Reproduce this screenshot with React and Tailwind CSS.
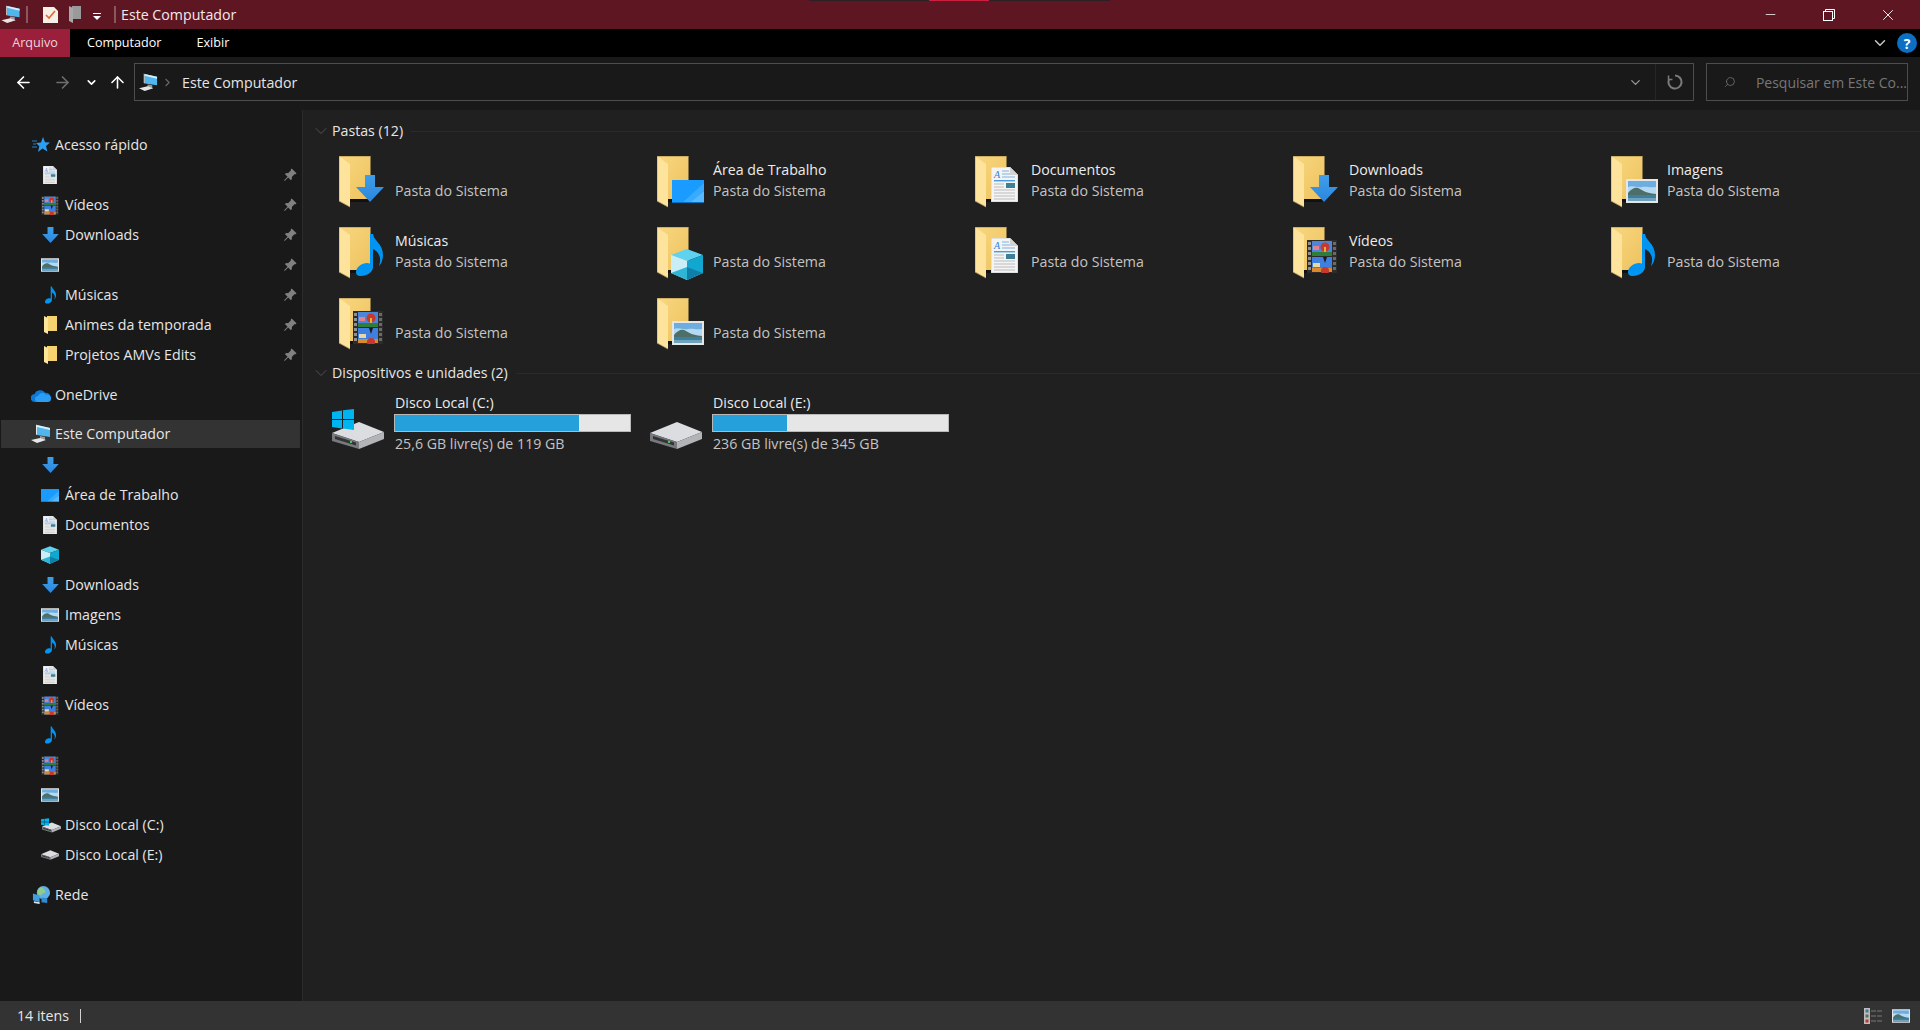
import { BsPinAngleFill } from 'react-icons/bs';
import { ArrowLeft, ArrowRight, ArrowUp, ChevronDown, ChevronRight, Search, Minus, X } from 'lucide-react';

// small drawings, each one on its own viewBox so the same shape works in sidebar and folder
function Arrow() {
  return (
    <svg viewBox="0 0 28 27" className="w-full h-full">
      <defs>
        <linearGradient id="arrowGrad" x1="0" y1="0" x2="0" y2="1">
          <stop offset="0" stopColor="#3f9fe8" />
          <stop offset="1" stopColor="#2b86de" />
        </linearGradient>
      </defs>
      <path d="M9 0h10v12h9L14 27 0 12h9z" fill="url(#arrowGrad)" />
    </svg>
  );
}

function Desktop() {
  return (
    <svg viewBox="0 0 32 23" className="w-full h-full">
      <rect width="32" height="23" fill="#1a9bff" />
      <path d="M10 23 L32 3 V10 L20 23z" fill="#38abff" />
      <path d="M18 23 L32 11 V23z" fill="#58b9ff" />
      <rect y="22" width="32" height="1" fill="#0b6fc0" />
    </svg>
  );
}

function Note() {
  return (
    <svg viewBox="0 0 27 42" className="w-full h-full">
      <path d="M14 0h3c1 7 10 10 10 21 0 5-2 9-4 11 1-4 2-7 0-11-1-3-4-5-6-6v18c0 5-6 9-12 9-4 0-5-2-5-4 0-5 6-9 11-9l3 .5z" fill="#0095f2" />
    </svg>
  );
}

function Cube() {
  return (
    <svg viewBox="0 0 32 31" className="w-full h-full">
      <path d="M16 0 32 6 16 12 0 6z" fill="#5ed2ee" />
      <path d="M0 6 16 12V31L0 24z" fill="#c9eef7" />
      <path d="M32 6 16 12V31L32 24z" fill="#12a7d1" />
      <path d="M0 24 16 18 32 24 16 31z" fill="#2eb5d6" />
      <path d="M16 18 32 24 16 31z" fill="#0f7fa8" />
    </svg>
  );
}

function Doc() {
  return (
    <svg viewBox="0 0 27 35" className="w-full h-full">
      <path d="M0 0h19l8 8v27H0z" fill="#f4f4f4" stroke="#b5b5b5" strokeWidth="0.6" />
      <path d="M19 0v8h8z" fill="#d2d2d2" />
      <text x="3" y="11" fontSize="10" fontStyle="italic" fontFamily="Liberation Serif, serif" fill="#2f86d2">A</text>
      <path d="M11 4h7M11 7h8M11 10h13" stroke="#7db4e4" strokeWidth="1.200" />
      <rect x="3" y="13" width="21" height="1.400" fill="#4a9cde" />
      <rect x="15" y="16" width="9" height="5" fill="#3e7f96" />
      <path d="M3 17h10M3 20h10M3 23h21M3 26h21M3 29h21M3 32h21" stroke="#bcbcbc" strokeWidth="1.200" />
    </svg>
  );
}

function Picture() {
  return (
    <svg viewBox="0 0 32 24" className="w-full h-full">
      <rect width="32" height="24" fill="#e6e6e6" />
      <rect x="2" y="2" width="28" height="20" fill="#b5d9f2" />
      <path d="M2 2h28v6c-6 1-10-1-14 0S6 6 2 8z" fill="#6eaddf" />
      <path d="M2 14c3-4 7-6 10-5s6 5 18 6v3H2z" fill="#4d6f68" />
      <rect x="2" y="16" width="28" height="6" fill="#3d7ea3" />
      <rect x="2" y="19" width="28" height="3" fill="#6ea2bd" />
    </svg>
  );
}

function Film() {
  const holes = [2, 7, 12, 17, 22, 27];
  return (
    <svg viewBox="0 0 30 33" className="w-full h-full">
      <rect width="30" height="33" fill="#2c2c2c" />
      {holes.map(y => (
        <g key={y}>
          <rect x="1" y={y} width="3" height="3" fill="#8f8f8f" />
          <rect x="26" y={y} width="3" height="3" fill="#6a6a6a" />
        </g>
      ))}
      <rect x="5" y="1" width="20" height="15" fill="#4c86d8" />
      <rect x="5" y="17" width="20" height="15" fill="#3f7fe0" />
      <rect x="5" y="12" width="20" height="4" fill="#2f7d3a" />
      <rect x="5" y="28" width="20" height="4" fill="#d98a2e" />
      <circle cx="18" cy="7" r="4.500" fill="#c9382c" />
      <rect x="17" y="7" width="2" height="5" fill="#e3b23a" />
      <circle cx="18" cy="31" r="4" fill="#c9382c" />
      <rect x="6" y="6" width="6" height="4" fill="#e77f8c" />
      <rect x="6" y="23" width="7" height="4" fill="#e7d7a0" />
      <path d="M16 17h4l-2 6z" fill="#1a1a1a" />
    </svg>
  );
}

function Drive() {
  return (
    <svg viewBox="0 0 52 27" className="w-full h-full">
      <path d="M0 11 27 0l25 10-25 10z" fill="#dcdde1" />
      <path d="M0 11 27 20v7L0 19z" fill="#77797d" />
      <path d="M27 20 52 10v7L27 27z" fill="#b2b4b8" />
      <path d="M3 14 24 20.500v3L3 17z" fill="#333436" />
      <rect x="18" y="19" width="2" height="2" fill="#39d353" />
    </svg>
  );
}

function WinLogo() {
  return (
    <svg viewBox="0 0 22 21" className="w-full h-full">
      <path d="M0 3l10-1.500v8.500H0zM11 1.300 22 0v10H11zM0 11h10v8.500L0 18zM11 11h11v10l-11-1.400z" fill="#00b4f0" />
    </svg>
  );
}

function Computer() {
  return (
    <svg viewBox="0 0 20 20" className="w-full h-full">
      <path d="M6 1 19 4v9L6 11z" fill="#4fb7ee" />
      <path d="M6 1 19 4v2L6 3z" fill="#d7eefb" />
      <path d="M5 0.500 6 1v10l-1-.5z" fill="#e8e8e8" />
      <path d="M9 12l5 1v3l-5-1z" fill="#9a9a9a" />
      <path d="M0 16l9-2 6 2-9 3z" fill="#e6e6e6" />
    </svg>
  );
}

function Star() {
  return (
    <svg viewBox="0 0 18 16" className="w-full h-full">
      <path d="M11 0l2 5.300 5 .3-4 3.400 1.400 5.500L10.500 11.500 6 15l1.300-5.700L4 6l5-.5z" fill="#2a9df4" />
      <path d="M0 4h5M1 7h3M0 10h5" stroke="#2a9df4" strokeWidth="0.800" />
    </svg>
  );
}

function Cloud() {
  return (
    <svg viewBox="0 0 20 13" className="w-full h-full">
      <path d="M4 13a4 4 0 0 1-.4-8A6 6 0 0 1 14 3.800 4.600 4.600 0 0 1 16 13z" fill="#0f78d4" />
      <path d="M7 13a3 3 0 0 1 0-6 4.500 4.500 0 0 1 8-1.200A3.700 3.700 0 0 1 20 9.500 3.500 3.500 0 0 1 16.500 13z" fill="#2a9df4" />
    </svg>
  );
}

function Globe() {
  return (
    <svg viewBox="0 0 20 20" className="w-full h-full">
      <circle cx="12" cy="7" r="7" fill="#5fb0e8" />
      <path d="M9 1c3 1 5 3 5 5s-3 1-4 3-3 1-4-1 0-5 3-7z" fill="#8ecb8c" />
      <path d="M1 8l7 2v7l-7-2z" fill="#3f9de0" />
      <path d="M2 16l6 1v2l-6-1z" fill="#e3e3e3" />
      <path d="M10 12l6 1v5l-6-1z" fill="#2f8bd2" />
    </svg>
  );
}

function FolderSmall() {
  return (
    <svg viewBox="0 0 13 18" className="w-full h-full">
      <rect x="3" width="10" height="15" fill="#f6d271" />
      <path d="M0 0l4 2v16l-4-2z" fill="#ffe59a" />
    </svg>
  );
}

// big folder with an overlay drawing lying on its lower right corner
function Folder({ overlay }) {
  return (
    <div className="relative w-[49px] h-[53px] shrink-0 mt-[2px]">
      <svg viewBox="0 0 32 52" className="absolute left-0 top-0 w-[32px] h-[52px]">
        <defs>
          <linearGradient id="folderBack" x1="0" y1="0" x2="1" y2="1">
            <stop offset="0" stopColor="#f8d77f" />
            <stop offset="1" stopColor="#eec25f" />
          </linearGradient>
        </defs>
        <path d="M0 0h31.500v43H11z" fill="url(#folderBack)" />
        <rect x="11" y="43" width="20" height="3" fill="#111" />
        <path d="M0 0 11 8v43L0 45z" fill="#fde39b" />
        <path d="M0 0h31.500" stroke="#a88a52" strokeWidth="1" />
        <path d="M0 0v45l11 6" stroke="#b89a60" strokeWidth="0.800" fill="none" />
      </svg>
      {overlay === 'arrow' && <div className="absolute left-[17px] top-[19px] w-[28px] h-[27px]"><Arrow /></div>}
      {overlay === 'desktop' && <div className="absolute left-[15px] top-[24px] w-[32px] h-[23px]"><Desktop /></div>}
      {overlay === 'note' && <div className="absolute left-[17px] top-[7px] w-[27px] h-[42px]"><Note /></div>}
      {overlay === 'cube' && <div className="absolute left-[14px] top-[22px] w-[32px] h-[31px]"><Cube /></div>}
      {overlay === 'doc' && <div className="absolute left-[16px] top-[11px] w-[27px] h-[35px]"><Doc /></div>}
      {overlay === 'picture' && <div className="absolute left-[15px] top-[23px] w-[32px] h-[24px]"><Picture /></div>}
      {overlay === 'film' && <div className="absolute left-[14px] top-[13px] w-[30px] h-[33px]"><Film /></div>}
    </div>
  );
}

const folders = [
  { name: '', overlay: 'arrow' },
  { name: 'Área de Trabalho', overlay: 'desktop' },
  { name: 'Documentos', overlay: 'doc' },
  { name: 'Downloads', overlay: 'arrow' },
  { name: 'Imagens', overlay: 'picture' },
  { name: 'Músicas', overlay: 'note' },
  { name: '', overlay: 'cube' },
  { name: '', overlay: 'doc' },
  { name: 'Vídeos', overlay: 'film' },
  { name: '', overlay: 'note' },
  { name: '', overlay: 'film' },
  { name: '', overlay: 'picture' },
];

const drives = [
  { name: 'Disco Local (C:)', info: '25,6 GB livre(s) de 119 GB', used: 'w-[184px]', windows: true },
  { name: 'Disco Local (E:)', info: '236 GB livre(s) de 345 GB', used: 'w-[74px]', windows: false },
];

function SideIcon({ kind }) {
  if (kind === 'doc') return <div className="w-[14px] h-[18px]"><Doc /></div>;
  if (kind === 'film') return <div className="w-[18px] h-[19px]"><Film /></div>;
  if (kind === 'arrow') return <div className="w-[17px] h-[16px]"><Arrow /></div>;
  if (kind === 'picture') return <div className="w-[18px] h-[14px]"><Picture /></div>;
  if (kind === 'note') return <div className="w-[11px] h-[18px]"><Note /></div>;
  if (kind === 'folder') return <div className="w-[13px] h-[18px]"><FolderSmall /></div>;
  if (kind === 'desktop') return <div className="w-[18px] h-[13px]"><Desktop /></div>;
  if (kind === 'cube') return <div className="w-[18px] h-[18px]"><Cube /></div>;
  if (kind === 'driveC') {
    return (
      <div className="relative w-[20px] h-[15px]">
        <div className="absolute left-[1px] bottom-0 w-[19px] h-[11px]"><Drive /></div>
        <div className="absolute left-0 top-0 w-[8px] h-[8px]"><WinLogo /></div>
      </div>
    );
  }
  return <div className="w-[18px] h-[10px]"><Drive /></div>;
}

function SideItem({ kind, label, pinned }) {
  return (
    <div className="h-[30px] flex items-center pl-[41px] pr-[5px]">
      <div className="w-[18px] flex justify-center shrink-0"><SideIcon kind={kind} /></div>
      <span className="ml-[6px] flex-1 text-[#e6e6e6]">{label}</span>
      {pinned && <BsPinAngleFill className="w-[14px] h-[14px] text-[#808080]" />}
    </div>
  );
}

function SideHead({ icon, label }) {
  return (
    <div className="h-[30px] flex items-center pl-[31px]">
      <div className="w-[20px] flex justify-center shrink-0">{icon}</div>
      <span className="ml-[4px] text-[#e6e6e6]">{label}</span>
    </div>
  );
}

function SectionHead({ label }) {
  return (
    <div className="h-[28px] flex items-center pl-[8px]">
      <ChevronDown className="w-[20px] h-[20px] text-[#5c5c5c]" strokeWidth={1} />
      <span className="ml-px text-[#e6e6e6]">{label}</span>
      <div className="flex-1 h-px bg-[#2a2a2a] ml-[8px]" />
    </div>
  );
}

export default function App() {
  return (
    <div className="relative w-[1920px] h-[1030px] flex flex-col overflow-hidden bg-[#202020] text-[14.2px] text-white font-['Open_Sans','Noto_Sans',sans-serif]">
      {/* title bar */}
      <div className="relative h-[29px] shrink-0 bg-[#5f1623] flex items-center">
        <div className="absolute left-[809px] top-0 w-[301px] h-px bg-[#2b2024]" />
        <div className="absolute left-[929px] top-0 w-[60px] h-px bg-[#c8203f]" />
        <div className="ml-[1px] w-[20px] h-[19px]"><Computer /></div>
        <div className="ml-[5px] w-[2px] h-[17px] bg-[#8a5660]" />
        <svg viewBox="0 0 15 16" className="ml-[15px] w-[15px] h-[16px]">
          <path d="M0 0h11l4 4v12H0z" fill="#f5f0e6" />
          <path d="M3 8l3 3 6-7" stroke="#e8642c" strokeWidth="1.600" fill="none" />
        </svg>
        <svg viewBox="0 0 12 17" className="ml-[11px] w-[12px] h-[17px]">
          <path d="M3 0h9v13H3z" fill="#9a9a9a" />
          <path d="M0 0l4 2v15l-4-2z" fill="#a8a8a8" />
        </svg>
        <svg viewBox="0 0 8 7" className="ml-[12px] mt-[3px] w-[8px] h-[7px]">
          <rect width="8" height="1" fill="#fff" />
          <path d="M0 3h8L4 7z" fill="#fff" />
        </svg>
        <div className="ml-[13px] w-[2px] h-[17px] bg-[#8a5660]" />
        <span className="ml-[5px] text-[#f4e9eb]">Este Computador</span>
        <div className="flex-1" />
        <Minus className="w-[15px] h-[15px]" strokeWidth={1.200} />
        <svg viewBox="0 0 12 12" className="ml-[45px] w-[12px] h-[12px]" fill="none" stroke="#fff">
          <rect x="0.500" y="2.500" width="9" height="9" />
          <path d="M2.500 2.500v-2h9v9h-2" />
        </svg>
        <X className="ml-[44px] mr-[23px] w-[18px] h-[18px]" strokeWidth={1.200} />
      </div>

      {/* ribbon tabs */}
      <div className="h-[28px] shrink-0 bg-black flex items-center text-[12.6px]">
        <div className="w-[70px] h-full bg-[#9b1e3b] flex items-center justify-center text-[#ecd5da]">Arquivo</div>
        <span className="ml-[17px]">Computador</span>
        <span className="ml-[35px]">Exibir</span>
        <div className="flex-1" />
        <ChevronDown className="w-[18px] h-[18px] text-[#c8c8c8]" strokeWidth={2} />
        <div className="ml-[8px] mr-[3px] w-[20px] h-[20px] rounded-full bg-[#0b6fc4] flex items-center justify-center text-[14px] font-bold">?</div>
      </div>

      {/* address row */}
      <div className="h-[53px] shrink-0 bg-[#191919] flex items-start pt-[6px]">
        <div className="w-[134px] h-[38px] flex items-center shrink-0">
          <ArrowLeft className="ml-[14px] w-[19px] h-[19px]" strokeWidth={2} />
          <ArrowRight className="ml-[20px] w-[19px] h-[19px] text-[#6e6e6e]" strokeWidth={2} />
          <ChevronDown className="ml-[13px] w-[13px] h-[13px]" strokeWidth={3} />
          <ArrowUp className="ml-[10px] w-[19px] h-[19px]" strokeWidth={2} />
        </div>
        <div className="w-[1560px] h-[38px] border border-[#4d4d4d] flex items-center">
          <div className="ml-[4px] w-[19px] h-[19px]"><Computer /></div>
          <ChevronRight className="ml-[3px] w-[13px] h-[13px] text-[#6a6a6a]" strokeWidth={2} />
          <span className="ml-[8px] mt-[2px] text-[#e6e6e6]">Este Computador</span>
          <div className="flex-1" />
          <ChevronDown className="w-[15px] h-[15px] text-[#9a9a9a]" strokeWidth={2} />
          <div className="ml-[12px] w-px h-full bg-[#262626]" />
          <svg viewBox="0 0 16 16" className="ml-[11px] mr-[10px] w-[16px] h-[16px]" fill="none" stroke="#7a7a7a" strokeWidth="2">
            <path d="M8 1.500a6.500 6.500 0 1 1-5.800 3.600" />
            <path d="M1.500 1.500v4h4" strokeWidth="1.500" />
          </svg>
        </div>
        <div className="ml-[12px] w-[202px] h-[38px] border border-[#4d4d4d] flex items-center">
          <Search className="ml-[17px] w-[16px] h-[16px] -scale-x-100 text-[#7a7a7a]" strokeWidth={1.500} />
          <span className="ml-[20px] whitespace-nowrap text-[14px] text-[#777777]">Pesquisar em Este Co...</span>
        </div>
      </div>

      {/* body */}
      <div className="flex-1 flex min-h-0">
        <aside className="w-[302px] shrink-0 bg-[#191919] border-r border-[#2b2b2b] box-content pt-[20px]">
          <SideHead icon={<div className="w-[18px] h-[16px]"><Star /></div>} label="Acesso rápido" />
          <SideItem kind="doc" pinned />
          <SideItem kind="film" label="Vídeos" pinned />
          <SideItem kind="arrow" label="Downloads" pinned />
          <SideItem kind="picture" pinned />
          <SideItem kind="note" label="Músicas" pinned />
          <SideItem kind="folder" label="Animes da temporada" pinned />
          <SideItem kind="folder" label="Projetos AMVs Edits" pinned />
          <div className="mt-[10px]">
            <SideHead icon={<div className="w-[20px] h-[13px]"><Cloud /></div>} label="OneDrive" />
          </div>
          <div className="mt-[10px] mb-[2px] ml-px mr-[2px] h-[28px] flex items-center pl-[30px] bg-[#333333]">
            <div className="w-[20px] h-[20px] shrink-0"><Computer /></div>
            <span className="ml-[4px] text-[#e6e6e6]">Este Computador</span>
          </div>
          <SideItem kind="arrow" />
          <SideItem kind="desktop" label="Área de Trabalho" />
          <SideItem kind="doc" label="Documentos" />
          <SideItem kind="cube" />
          <SideItem kind="arrow" label="Downloads" />
          <SideItem kind="picture" label="Imagens" />
          <SideItem kind="note" label="Músicas" />
          <SideItem kind="doc" />
          <SideItem kind="film" label="Vídeos" />
          <SideItem kind="note" />
          <SideItem kind="film" />
          <SideItem kind="picture" />
          <SideItem kind="driveC" label="Disco Local (C:)" />
          <SideItem kind="drive" label="Disco Local (E:)" />
          <div className="mt-[10px]">
            <SideHead icon={<div className="w-[19px] h-[19px]"><Globe /></div>} label="Rede" />
          </div>
        </aside>

        <main className="flex-1 min-w-0 pt-[7px]">
          <SectionHead label="Pastas (12)" />
          <div className="mt-px ml-[29px] grid grid-cols-[repeat(5,318px)] auto-rows-[71px]">
            {folders.map((folder, i) => (
              <div key={i} className="flex items-center pl-[7px]">
                <Folder overlay={folder.overlay} />
                <div className="ml-[7px] mb-[4px] leading-[21px]">
                  <div className="h-[21px] text-[#ececec]">{folder.name}</div>
                  <div className="text-[#c4c4c4]">Pasta do Sistema</div>
                </div>
              </div>
            ))}
          </div>
          <SectionHead label="Dispositivos e unidades (2)" />
          <div className="ml-[29px] grid grid-cols-[repeat(5,318px)]">
            {drives.map(drive => (
              <div key={drive.name} className="h-[68px] flex items-start">
                <div className="relative w-[52px] h-[40px] shrink-0 mt-[22px]">
                  <div className="absolute left-0 bottom-0 w-[52px] h-[27px]"><Drive /></div>
                  {drive.windows && <div className="absolute left-0 top-0 w-[22px] h-[21px]"><WinLogo /></div>}
                </div>
                <div className="ml-[10px] pt-[5px] leading-[21px]">
                  <div className="ml-px h-[22px] text-[#ececec]">{drive.name}</div>
                  <div className="w-[237px] h-[18px] border border-[#b8b8b8] bg-[#e6e6e6]">
                    <div className={`h-full bg-[#26a0da] ${drive.used}`} />
                  </div>
                  <div className="ml-px mt-px text-[#c4c4c4]">{drive.info}</div>
                </div>
              </div>
            ))}
          </div>
        </main>
      </div>

      {/* status bar */}
      <div className="h-[29px] shrink-0 bg-[#333333] flex items-center text-[#e6e6e6]">
        <span className="ml-[17px]">14 itens</span>
        <div className="ml-[11px] w-px h-[14px] bg-[#d0d0d0]" />
        <div className="flex-1" />
        <svg viewBox="0 0 18 16" className="w-[18px] h-[16px]">
          <rect width="6" height="16" fill="#bdbdbd" />
          <rect x="1.500" y="1.500" width="3" height="3" fill="#3e7f96" />
          <rect x="1.500" y="6.500" width="3" height="3" fill="#6a6a5a" />
          <rect x="1.500" y="11.500" width="3" height="3" fill="#c03a2a" />
          <path d="M7 3h5M13 3h5M7 8h5M13 8h5M7 13h5M13 13h5" stroke="#7a7a7a" strokeWidth="1" />
        </svg>
        <div className="ml-[10px] mr-[10px] w-[18px] h-[14px]"><Picture /></div>
      </div>
    </div>
  );
}
